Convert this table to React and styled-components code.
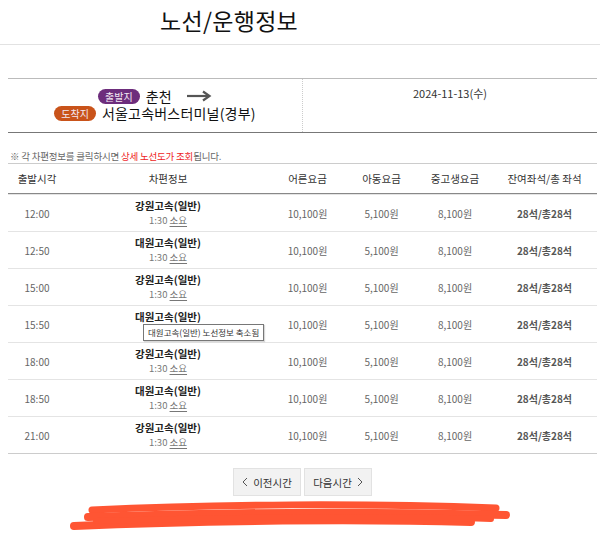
import React from 'react';
import styled, { createGlobalStyle } from 'styled-components';

const GlobalStyle = createGlobalStyle`
	body {
		margin: 0;
		background: #fff;
		font-family: 'Noto Sans CJK KR', 'Noto Sans', sans-serif;
		color: #333;
	}
`;

const Page = styled.div`
	width: 600px;
	height: 546px;
	overflow: hidden;
`;

const TitleBar = styled.div`
	height: 44px;
	border-bottom: 1px solid #e2e2e2;
	padding-left: 160px;

	h1 {
		margin: 0;
		font-size: 23px;
		font-weight: 400;
		line-height: 40px;
		color: #111;
		letter-spacing: 0.3px;
	}
`;

const Content = styled.div`
	margin: 33px 3px 0 8px;
`;

const RouteBox = styled.div`
	display: flex;
	height: 53px;
	border-top: 1px solid #bbb;
	border-bottom: 1px solid #777;

	.route {
		width: 294px;
		border-right: 1px dotted #ccc;
		display: flex;
		flex-direction: column;
		align-items: center;
		justify-content: center;
		padding-bottom: 2px;
	}

	.line {
		display: flex;
		align-items: center;
		height: 17px;
	}

	.place {
		font-size: 14px;
		line-height: 17px;
		color: #111;
		margin-left: 6px;
		letter-spacing: 0.2px;
	}

	.date {
		flex: 1;
		text-align: center;
		font-size: 11px;
		color: #333;
		padding-top: 6px;
	}
`;

const Badge = styled.span`
	display: inline-block;
	height: 15px;
	line-height: 15px;
	padding: 0 7px;
	border-radius: 8px;
	font-size: 10px;
	color: #f3e9f3;
	background: ${(props) => props.color};
`;

const Notice = styled.p`
	margin: 0;
	box-sizing: border-box;
	height: 30px;
	padding: 15px 0 0 2px;
	line-height: 16px;
	font-size: 9.5px;
	color: #666;
	letter-spacing: -0.2px;

	em {
		font-style: normal;
		color: #ee1c24;
	}
`;

const Row = styled.div`
	display: grid;
	grid-template-columns: 58px 204px 75px 73px 74px 1fr;
	align-items: center;
	height: ${(props) => (props.head ? '29px' : '36px')};
	border-top: 1px solid ${(props) => (props.head ? '#ccc' : '#e4e4e4')};
	${(props) => props.head && 'border-bottom: 1px solid #888;'}
	${(props) => props.last && 'border-bottom: 1px solid #ccc;'}
	font-size: ${(props) => (props.head ? '10.5px' : '10px')};
	color: ${(props) => (props.head ? '#333' : '#666')};
	text-align: center;

	& + & {
		border-top: ${(props) => (props.head ? 'none' : '1px solid #e4e4e4')};
	}
`;

const BusCell = styled.div`
	position: relative;
	display: flex;
	flex-direction: column;
	align-items: center;
	line-height: 15px;

	.name {
		font-weight: 700;
		color: #222;
		font-size: 10.5px;
	}

	.time {
		color: #777;
		font-size: 9.5px;

		u {
			text-decoration: underline;
			text-underline-offset: 2px;
		}
	}
`;

const Tooltip = styled.div`
	position: absolute;
	left: 77px;
	top: 15px;
	padding: 0 4px;
	height: 15px;
	line-height: 15px;
	background: #fff;
	border: 1px solid #777;
	font-size: 8.5px;
	color: #333;
	white-space: nowrap;
	box-shadow: 1px 1px 1px rgba(0, 0, 0, 0.15);
`;

const Seat = styled.div`
	font-weight: 700;
	color: #555;
`;

const Pager = styled.div`
	display: flex;
	justify-content: center;
	gap: 3px;
	margin: 14px 0 0 5px;
`;

const PageButton = styled.button`
	width: 68px;
	height: 28px;
	background: #f2f2f2;
	border: 1px solid #e2e2e2;
	font-family: inherit;
	font-size: 10.5px;
	color: #333;
	display: flex;
	align-items: center;
	justify-content: center;
	gap: 5px;
	padding: 0;
`;

const Scribble = styled.svg`
	display: block;
	margin: 4px 0 0 66px;
`;

const rows = [
	{ time: '12:00', bus: '강원고속(일반)' },
	{ time: '12:50', bus: '대원고속(일반)' },
	{ time: '15:00', bus: '강원고속(일반)' },
	{ time: '15:50', bus: '대원고속(일반)', tip: true },
	{ time: '18:00', bus: '강원고속(일반)' },
	{ time: '18:50', bus: '대원고속(일반)' },
	{ time: '21:00', bus: '강원고속(일반)' },
];

const Arrow = () => (
	<svg width='26' height='12' viewBox='0 0 26 12' style={{ marginLeft: 14 }}>
		<path d='M1 6 H23' stroke='#555' strokeWidth='2.2' />
		<path d='M17 1.5 L23.5 6 L17 10.5' stroke='#555' strokeWidth='2.2' fill='none' />
	</svg>
);

const Chevron = ({ dir }) => (
	<svg width='6' height='10' viewBox='0 0 6 10'>
		<path
			d={dir === 'left' ? 'M5 1 L1 5 L5 9' : 'M1 1 L5 5 L1 9'}
			stroke='#555'
			strokeWidth='1'
			fill='none'
		/>
	</svg>
);

const App = () => {
	return (
		<Page>
			<GlobalStyle />
			<TitleBar>
				<h1>노선/운행정보</h1>
			</TitleBar>
			<Content>
				<RouteBox>
					<div className='route'>
						<div className='line'>
							<Badge color='#6d2d7c'>출발지</Badge>
							<span className='place'>춘천</span>
							<Arrow />
						</div>
						<div className='line'>
							<Badge color='#c9531a'>도착지</Badge>
							<span className='place'>서울고속버스터미널(경부)</span>
						</div>
					</div>
					<div className='date'>2024-11-13(수)</div>
				</RouteBox>
				<Notice>
					※ 각 차편정보를 클릭하시면 <em>상세 노선도가 조회</em>됩니다.
				</Notice>
				<Row head>
					<div>출발시각</div>
					<div>차편정보</div>
					<div>어른요금</div>
					<div>아동요금</div>
					<div>중고생요금</div>
					<div>잔여좌석/총 좌석</div>
				</Row>
				{rows.map((r, i) => (
					<Row key={r.time} last={i === rows.length - 1}>
						<div>{r.time}</div>
						<BusCell>
							<span className='name'>{r.bus}</span>
							<span className='time'>
								1:30 <u>소요</u>
							</span>
							{r.tip && <Tooltip>대원고속(일반) 노선정보 축소됨</Tooltip>}
						</BusCell>
						<div>10,100원</div>
						<div>5,100원</div>
						<div>8,100원</div>
						<Seat>28석/총28석</Seat>
					</Row>
				))}
			</Content>
			<Pager>
				<PageButton>
					<Chevron dir='left' /> 이전시간
				</PageButton>
				<PageButton>
					다음시간 <Chevron dir='right' />
				</PageButton>
			</Pager>
			<Scribble width='450' height='34' viewBox='0 0 450 34'>
				<g stroke='#ff5533' strokeLinecap='round' fill='none'>
					<path d='M26 10 C150 4 300 3 430 8' strokeWidth='7' />
					<path d='M22 17 C160 12 320 12 440 15' strokeWidth='8' />
					<path d='M8 26 C140 20 300 19 405 22' strokeWidth='8' />
					<path d='M30 21 C170 17 330 16 425 19' strokeWidth='6' />
				</g>
			</Scribble>
		</Page>
	);
};

export default App;
